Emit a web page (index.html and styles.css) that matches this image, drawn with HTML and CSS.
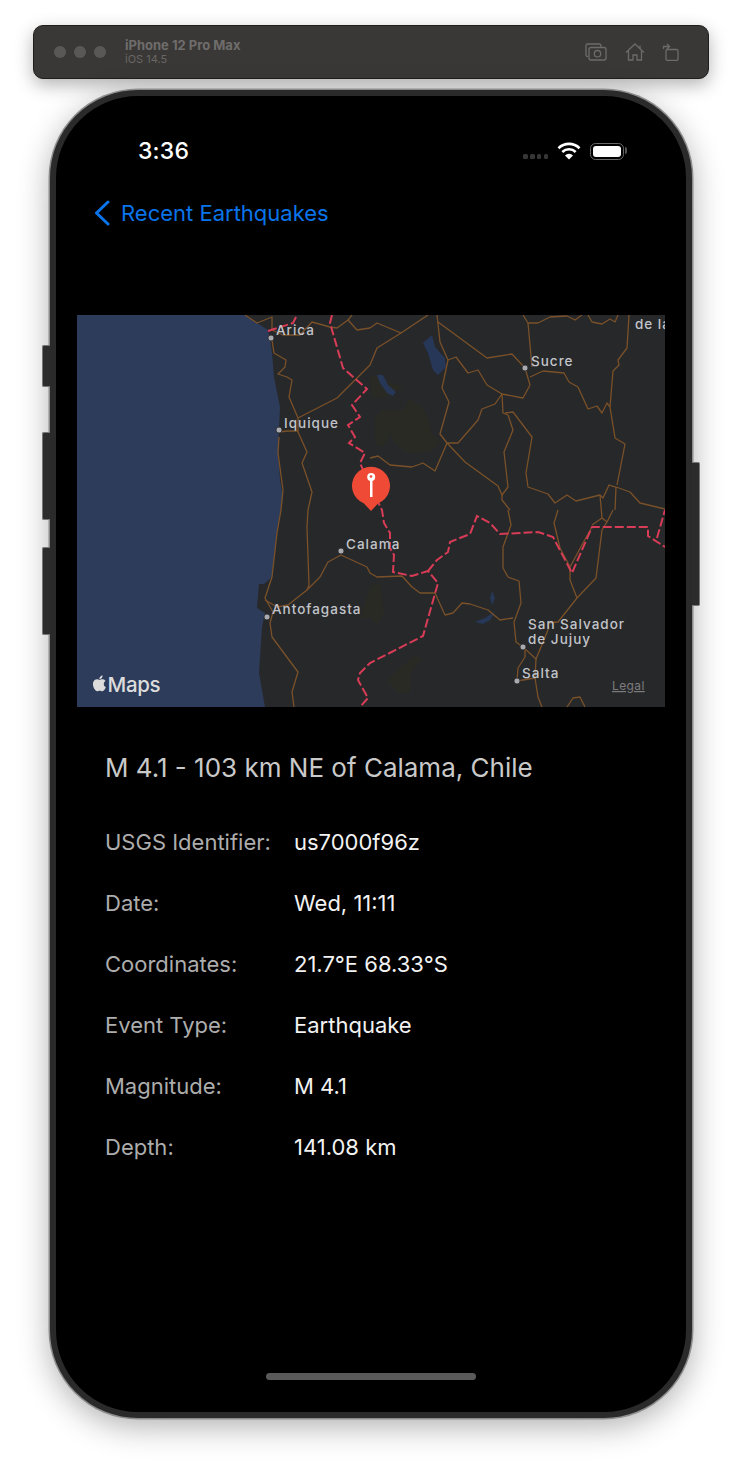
FILE: index.html
```html
<!DOCTYPE html>
<html lang="en">
<head>
<meta charset="utf-8">
<title>Earthquake detail</title>
<link rel="stylesheet" href="styles.css">
</head>
<body>
<header class="toolbar">
  <div class="lights"><span></span><span></span><span></span></div>
  <div class="device"><div class="device-name">iPhone 12 Pro Max</div><div class="device-os">iOS 14.5</div></div>
  <div class="tools">
    <svg class="tool-camera" viewBox="0 0 22 18"><path d="M3 13.5H2.5A1.5 1.5 0 0 1 1 12V2.5A1.5 1.5 0 0 1 2.500 1H14a2 2 0 0 1 2 2v1"/><rect x="4" y="4.500" width="17" height="12.500" rx="2"/><circle cx="12.500" cy="10.700" r="3.200"/></svg>
    <svg class="tool-home" viewBox="0 0 20 18"><path d="M1 9.500 10 1l9 8.500"/><path d="M3.500 8v9h4.500v-5h4v5h4.500V8"/><path d="M15 2.500v3"/></svg>
    <svg class="tool-rotate" viewBox="0 0 17 18"><rect x="4" y="6.500" width="12" height="11" rx="1.500"/><path d="M1.500 6V3.500h5.500"/><path d="M5 1l2.500 2.500L5 6"/></svg>
  </div>
</header>

<main class="phone">
  <span class="side-btn side-mute"></span>
  <span class="side-btn side-up"></span>
  <span class="side-btn side-down"></span>
  <span class="side-btn side-power"></span>

  <div class="status">
    <span class="clock">3:36</span>
    <div class="status-icons">
      <div class="signal"><i></i><i></i><i></i><i></i></div>
      <svg class="wifi" viewBox="0 0 24 18"><path class="wifi-arc" d="M1.500 6.200a15 15 0 0 1 21 0"/><path class="wifi-arc" d="M5.300 10a9.600 9.600 0 0 1 13.400 0"/><path class="wifi-dot" d="M12 17.500 8 13.400a5.700 5.700 0 0 1 8 0z"/></svg>
      <div class="battery"><div class="battery-fill"></div></div>
    </div>
  </div>

  <nav class="nav">
    <svg class="chevron" viewBox="0 0 18 26"><path d="M15 2 3.500 13 15 24"/></svg>
    <span class="nav-title">Recent Earthquakes</span>
  </nav>

  <svg class="map" viewBox="77 315 588 392">
    <rect class="map-land" x="77" y="315" width="588" height="392"/>
    <path class="map-water" d="M77 315H245L257 323L268 330L270 340L272 353L274 377L280 407L279 430L278 450L280 480L283 497L281 510L277 533L272 577L264 584L259 584L257 608L265 613L262 627L259 673L265 707H77Z"/>
    <g class="flat">
      <path d="M375 417 382 410H403L410 398 425 410 432 433 440 442 430 452 407 453 395 443 390 433 383 447 375 443Z"/>
      <path d="M370 377 375 375 403 388 383 398 372 397Z"/>
      <path d="M360 620 370 587 380 582 384 613 377 625 370 617Z"/>
      <path d="M387 680 413 657 422 658 410 673 410 693 398 693Z"/>
    </g>
    <g class="lake">
      <path d="M432 335 423 343 428 353 433 370 438 375 446 367 445 358 435 347Z"/>
      <path d="M377 375H383L388 385 396 392 393 396 387 393 380 383Z"/>
      <path d="M492 591 495 598 492 605 490 598Z"/>
      <path d="M495 612 490 620 483 624 475 622 485 618 493 613Z"/>
    </g>
    <g class="roads">
      <polyline points="245,315 257,323 272,317 272,330 283,335 300,335 312,322 330,327 337,328 348,320 357,330 370,328"/>
      <polyline points="348,320 352,315"/>
      <polyline points="272,340 274,353 286,360 285,367 278,374 287,377 292,380 289,397 298,418 298,432 307,452 302,463 312,492 308,510 307,527 309,585 307,590"/>
      <polyline points="298,418 337,398 370,365 377,348 401,333 428,315"/>
      <polyline points="370,328 377,323 401,333"/>
      <polyline points="279,432 287,431 298,431"/>
      <polyline points="279,437 278,453 283,490 281,510 277,533 272,577 265,598 273,612 270,623 272,637 298,672 292,692 294,707"/>
      <polyline points="265,600 277,607 288,605 307,590 320,577 328,562 341,555 367,567 370,573 377,577 402,576 412,587 420,593 435,593 445,615 453,613 462,603 470,604 488,610 500,620 513,618"/>
      <polyline points="508,510 511,525 503,547 503,568 508,577 519,581 521,603 514,622 516,642 523,647 536,659 548,630 548,623 558,622 577,598 596,578 602,530 607,522 613,510"/>
      <polyline points="558,510 554,523 560,548 570,567 570,580 577,598"/>
      <polyline points="600,495 602,518 607,522"/>
      <polyline points="592,525 602,518"/>
      <polyline points="570,567 583,543 592,527"/>
      <polyline points="525,650 525,657 518,668 517,681 535,678 536,659"/>
      <polyline points="535,678 538,697 542,707"/>
      <polyline points="567,707 573,698 580,697 585,707"/>
      <polyline points="437,315 440,342 448,360 442,388 449,402 440,434 447,443 435,471 423,463 412,467 390,465 378,456 370,458"/>
      <polyline points="438,322 487,358 512,354 525,368 530,385 523,398 502,394 487,385 478,370 468,373 456,357 448,360"/>
      <polyline points="502,394 495,404 482,409 478,420 458,443 447,443 465,462 498,486 502,495 508,487 504,452 513,430 508,415 503,413 502,394"/>
      <polyline points="502,495 502,500 510,510"/>
      <polyline points="505,413 513,412 532,437 526,473 528,487 548,494 555,503 567,495 576,501 600,495 603,498 609,485 616,487 630,492 640,503 665,509"/>
      <polyline points="616,487 615,510"/>
      <polyline points="523,315 528,323 538,323 550,317 567,316 575,320 582,315"/>
      <polyline points="528,323 532,367"/>
      <polyline points="588,315 592,322 602,324 610,319 615,322 618,315"/>
      <polyline points="629,315 627,348 618,360 619,365 613,371 610,407 615,438 625,444 617,485"/>
      <polyline points="530,377 543,371 564,373 569,382 578,387 588,409 597,406 602,413 607,403 610,407"/>
    </g>
    <g class="borders">
      <polyline points="268,331 293,323 297,315"/>
      <polyline points="332,315 330,323 343,368 367,389 352,405 360,417 348,425 355,437 349,443 365,453 360,463 372,490 382,510 384,523 390,533 390,548 394,555 393,572 412,576 428,571 438,583 423,636 370,663 360,673 358,680 368,698 360,707"/>
      <polyline points="428,571 437,560 448,552 450,542 470,534 477,516 490,523 500,534 538,532 553,537 572,573 592,527 648,527 648,536 665,547"/>
      <polyline points="657,538 665,510"/>
    </g>
    <g class="dots">
      <circle cx="271" cy="338" r="3"/>
      <circle cx="279" cy="430" r="3"/>
      <circle cx="525" cy="368" r="3"/>
      <circle cx="341" cy="551" r="3"/>
      <circle cx="267" cy="617" r="3"/>
      <circle cx="523" cy="647" r="3"/>
      <circle cx="517" cy="681" r="3"/>
    </g>
    <g class="city">
      <text x="276" y="335">Arica</text>
      <text x="284" y="428">Iquique</text>
      <text x="531" y="366">Sucre</text>
      <text x="346" y="549">Calama</text>
      <text x="272" y="614">Antofagasta</text>
      <text x="528" y="629">San Salvador</text>
      <text x="528" y="644">de Jujuy</text>
      <text x="522" y="678">Salta</text>
      <text x="635" y="329">de la</text>
    </g>
    <path class="pin" d="M371 511 364 503.500A19 19 0 1 1 378 503.500Z"/>
    <rect class="pin-stem" x="370" y="480" width="2.500" height="17"/>
    <circle class="pin-head" cx="371.200" cy="477" r="4"/>
    <circle class="pin-eye" cx="371" cy="476.500" r="1.300"/>
    <path class="apple" transform="translate(91.500 675.500) scale(.66)" d="M12.152 6.896c-.948 0-2.415-1.078-3.960-1.040-2.040.027-3.910 1.183-4.961 3.014-2.117 3.675-.546 9.103 1.519 12.090 1.013 1.454 2.208 3.090 3.792 3.039 1.520-.065 2.090-.987 3.935-.987 1.831 0 2.350.987 3.960.948 1.637-.026 2.676-1.480 3.676-2.948 1.156-1.688 1.636-3.325 1.662-3.415-.039-.013-3.182-1.221-3.220-4.857-.026-3.040 2.480-4.494 2.597-4.559-1.429-2.090-3.623-2.324-4.390-2.376-2-.156-3.675 1.090-4.610 1.090zM15.530 3.830c.843-1.012 1.400-2.427 1.245-3.830-1.207.052-2.662.805-3.532 1.818-.780.896-1.454 2.338-1.273 3.714 1.338.104 2.715-.688 3.559-1.701"/>
    <text class="maps-word" x="107.500" y="692">Maps</text>
    <text class="legal" x="612" y="690">Legal</text>
  </svg>

  <section class="details">
    <h1 class="headline">M 4.1 - 103 km NE of Calama, Chile</h1>
    <dl class="facts">
      <div class="fact"><dt>USGS Identifier:</dt><dd>us7000f96z</dd></div>
      <div class="fact"><dt>Date:</dt><dd>Wed, 11:11</dd></div>
      <div class="fact"><dt>Coordinates:</dt><dd>21.7°E 68.33°S</dd></div>
      <div class="fact"><dt>Event Type:</dt><dd>Earthquake</dd></div>
      <div class="fact"><dt>Magnitude:</dt><dd>M 4.1</dd></div>
      <div class="fact"><dt>Depth:</dt><dd>141.08 km</dd></div>
    </dl>
  </section>

  <div class="home-bar"></div>
</main>
</body>
</html>
```

FILE: styles.css
```css
* { box-sizing: border-box; }
html, body { margin: 0; padding: 0; height: 1463px; overflow: hidden; background: #fff; }
body { padding-top: 25px; font-family: Inter, "Liberation Sans", sans-serif; }

.toolbar {
  width: 676px; height: 54px; margin-left: 33px;
  display: flex; align-items: center;
  background: #3a3836; border: 1px solid #1f1e1d; border-radius: 10px;
  box-shadow: 0 6px 18px rgba(0,0,0,.3);
}
.lights { display: flex; gap: 8px; margin-left: 20px; }
.lights span { width: 12px; height: 12px; border-radius: 50%; background: #5a5856; }
.device { margin-left: 19px; }
.device-name { font-size: 13px; font-weight: 700; color: #6f6d6b; line-height: 15px; }
.device-os { font-size: 11px; color: #686664; line-height: 13px; }
.tools { margin-left: auto; margin-right: 29px; display: flex; align-items: center; gap: 17px; }
.tools svg { display: block; fill: none; stroke: #6d6b69; stroke-width: 1.300; }
.tool-camera { width: 22px; height: 18px; margin-right: 1px; }
.tool-home { width: 20px; height: 18px; }
.tool-rotate { width: 17px; height: 18px; }

.phone {
  position: relative;
  width: 642px; height: 1328px; margin: 11px 0 0 50px;
  display: flex; flex-direction: column;
  background: #000; color: #fff;
  border: 6px solid #2a2a2a; border-radius: 88px;
  box-shadow: 0 0 0 1.500px #8c8c8c, 0 8px 32px rgba(0,0,0,.32);
}
.side-btn { position: absolute; width: 8px; background: #2c2c2c; border: 1px solid #777; }
.side-mute { left: -14px; top: 249px; height: 42px; border-radius: 2px 0 0 2px; border-right: 0; }
.side-up { left: -14px; top: 336px; height: 88px; border-radius: 2px 0 0 2px; border-right: 0; }
.side-down { left: -14px; top: 451px; height: 88px; border-radius: 2px 0 0 2px; border-right: 0; }
.side-power { right: -14px; top: 366px; height: 144px; border-radius: 0 2px 2px 0; border-left: 0; }

.status {
  display: flex; align-items: center; justify-content: space-between;
  height: 22px; margin: 44px 62px 0 82px;
}
.clock { font-size: 23px; font-weight: 500; line-height: 22px; letter-spacing: .2px; }
.status-icons { display: flex; align-items: center; }
.signal { display: flex; gap: 2.200px; margin: 11px 9px 0 0; }
.signal i { display: block; width: 4.500px; height: 4.500px; border-radius: 1.500px; background: #363636; }
.wifi { width: 24px; height: 18px; margin-right: 9px; }
.wifi-arc { fill: none; stroke: #fff; stroke-width: 2.600; }
.wifi-dot { fill: #fff; }
.battery { position: relative; width: 34px; height: 17px; padding: 2px; border: 1.500px solid #686868; border-radius: 5.500px; }
.battery::after { content: ""; position: absolute; right: -4px; top: 3.500px; width: 2px; height: 7px; background: #555; border-radius: 0 2px 2px 0; }
.battery-fill { height: 100%; background: #fff; border-radius: 3px; }

.nav { display: flex; align-items: center; height: 30px; margin: 36px 0 0 37px; }
.chevron { width: 18px; height: 26px; fill: none; stroke: #0a74ea; stroke-width: 3; stroke-linecap: round; stroke-linejoin: round; }
.nav-title { margin-left: 10px; font-size: 22px; color: #0a74ea; line-height: 30px; }

.map { display: block; flex: none; width: 588px; height: 392px; margin: 87px 0 0 21px; }
.map-land { fill: #27282a; }
.map-water { fill: #2d3c5a; }
.flat path { fill: #2a2a25; }
.lake path { fill: #263758; }
.roads polyline { fill: none; stroke: #7a5129; stroke-width: 1.300; stroke-linejoin: round; }
.borders polyline { fill: none; stroke: #d83c56; stroke-width: 2; stroke-dasharray: 9 3; }
.dots circle { fill: #a8aab0; stroke: #27282a; stroke-width: .8; }
.city text { font-size: 13.500px; font-weight: 500; letter-spacing: 1px; fill: #c2c4c9; }
.pin { fill: #ef4a36; }
.pin-stem, .pin-head { fill: #fff; }
.pin-eye { fill: #ef4a36; }
.apple { fill: #dcdcdc; }
.maps-word { font-size: 20.500px; font-weight: 500; fill: #dcdcdc; letter-spacing: -.3px; }
.legal { font-size: 12px; fill: #7c7c7e; text-decoration: underline; letter-spacing: .4px; }

.details { margin: 46px 0 0 49px; }
.headline { margin: 0; font-size: 26px; font-weight: 400; line-height: 30px; color: #c9c9c9; white-space: nowrap; }
.facts { margin: 28px 0 0; }
.fact { display: grid; grid-template-columns: 189px 1fr; height: 61px; align-items: center; font-size: 22px; }
.fact dt { color: #adadad; white-space: nowrap; }
.fact dd { margin: 0; color: #f2f2f2; white-space: nowrap; }

.home-bar { flex: none; width: 210px; height: 7px; margin: auto 0 32px 210px; border-radius: 4px; background: #5a5a5a; }
```
